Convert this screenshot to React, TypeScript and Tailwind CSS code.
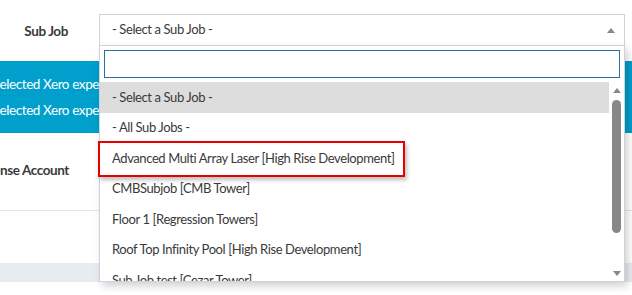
import React from "react"

const options = [
  "- Select a Sub Job -",
  "- All Sub Jobs -",
  "Advanced Multi Array Laser [High Rise Development]",
  "CMBSubjob [CMB Tower]",
  "Floor 1 [Regression Towers]",
  "Roof Top Infinity Pool [High Rise Development]",
  "Sub Job test [Cezar Tower]",
]

export default function App() {
  return (
    <div className="relative w-[632px] h-[295px] overflow-hidden bg-white text-[13px] tracking-[-0.4px] text-[#3a3a3a] font-['Lato',sans-serif]">
      {/* Sub Job row */}
      <div className="flex h-[61px] pt-[14px]">
        <div className="w-[99px] shrink-0 flex justify-end pr-[31px] pt-[7px] font-bold text-[13.5px] whitespace-nowrap">
          Sub Job
        </div>
        <div className="w-[526px] h-[32px] shrink-0 flex items-center justify-between border border-[#cdd2dc] pl-[12px] pr-[9px]">
          <span>- Select a Sub Job -</span>
          <span className="w-0 h-0 border-x-[4px] border-x-transparent border-b-[5px] border-b-[#888]" />
        </div>
      </div>

      {/* info band */}
      <div className="h-[72px] bg-[#009fcc] text-white text-[13.5px] flex flex-col justify-center gap-[6px] whitespace-nowrap">
        <div className="ml-[-6px]">selected Xero expense accounts will be imported</div>
        <div className="ml-[-6px]">selected Xero expense accounts will be mapped</div>
      </div>

      {/* Expense Account row */}
      <div className="flex h-[78px] border-b border-[#e2e4e8]">
        <div className="w-[99px] shrink-0 flex justify-end pr-[30px] pt-[27px] font-bold text-[13.5px] whitespace-nowrap">
          Expense Account
        </div>
      </div>
      <div className="h-[52px]" />
      <div className="h-[19px] bg-[#e8ebef]" />

      {/* open dropdown */}
      <div className="absolute left-[99px] top-[45px] w-[526px] h-[237px] bg-white border border-[#cdd2dc] shadow-[3px_4px_8px_rgba(0,0,0,0.18)] flex flex-col">
        <div className="p-[4px]">
          <div className="h-[28px] border border-[#2f6ea5]" />
        </div>
        <div className="flex flex-1 min-h-0">
          <div className="flex-1 overflow-hidden">
            {options.map((o, i) => (
              <div
                key={o}
                className={`h-[30.5px] flex items-center pl-[12px] whitespace-nowrap ${i === 0 ? "bg-[#dddddd]" : ""}`}
              >
                {o}
              </div>
            ))}
          </div>
          {/* scrollbar */}
          <div className="w-[15px] flex flex-col items-center pt-[6px] pb-[5px]">
            <span className="w-0 h-0 border-x-[4px] border-x-transparent border-b-[5px] border-b-[#888]" />
            <div className="w-[9px] h-[133px] mt-[7px] rounded-full bg-[#888]" />
            <div className="flex-1" />
            <span className="w-0 h-0 border-x-[4px] border-x-transparent border-t-[5px] border-t-[#888]" />
          </div>
        </div>
      </div>

      {/* highlight annotation */}
      <div className="absolute left-[98px] top-[141px] w-[307px] h-[36px] border-2 border-[#e60000] shadow-[2px_3px_4px_rgba(0,0,0,0.25)]" />
    </div>
  )
}
